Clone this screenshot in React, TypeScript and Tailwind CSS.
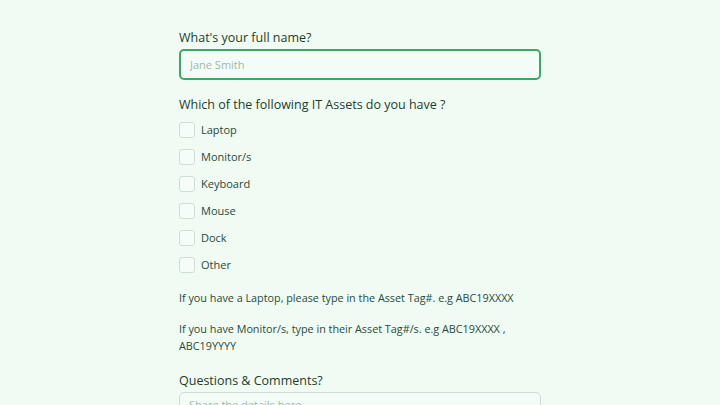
const ASSETS = ["Laptop", "Monitor/s", "Keyboard", "Mouse", "Dock", "Other"];

export default function App() {
  return (
    <div className="h-[405px] w-full overflow-hidden bg-[#f0fbf4] font-['Open_Sans',sans-serif] text-[#1d3d2d]">
      <div className="mx-auto w-[362px] pt-[29px]">
        {/* Name */}
        <label className="block text-[12.5px] leading-[17px] font-medium">What's your full name?</label>
        <input
          placeholder="Jane Smith"
          className="mt-[3px] h-[31px] w-full rounded-[5px] border-2 border-[#3ba866] bg-[#f4fcf7] px-[9px] text-[11px] outline-none placeholder:text-[#a3b6ab]"
        />

        {/* Assets */}
        <p className="mt-[16px] text-[12.5px] leading-[17px] font-medium">Which of the following IT Assets do you have ?</p>
        <div className="mt-[9px] flex flex-col gap-[11px]">
          {ASSETS.map((a) => (
            <label key={a} className="flex items-center gap-[6px]">
              <span className="h-[16px] w-[16px] rounded-[3px] border border-[#cfded4] bg-[#f6fdf8]" />
              <span className="text-[11px] leading-[16px] text-[#2a4a3a]">{a}</span>
            </label>
          ))}
        </div>

        <p className="mt-[16px] text-[10.8px] leading-[17px] text-[#2a4a3a]">
          If you have a Laptop, please type in the Asset Tag#. e.g ABC19XXXX
        </p>
        <p className="mt-[14px] text-[10.8px] leading-[17px] text-[#2a4a3a]">
          If you have Monitor/s, type in their Asset Tag#/s. e.g ABC19XXXX ,<br />ABC19YYYY
        </p>

        {/* Comments */}
        <label className="mt-[18px] block text-[12.5px] leading-[17px] font-medium">Questions &amp; Comments?</label>
        <textarea
          placeholder="Share the details here"
          className="mt-[3px] h-[60px] w-full resize-none rounded-[5px] border border-[#cfded4] bg-[#f4fcf7] px-[9px] py-[4px] text-[11px] outline-none placeholder:text-[#a3b6ab]"
        />
      </div>
    </div>
  );
}
